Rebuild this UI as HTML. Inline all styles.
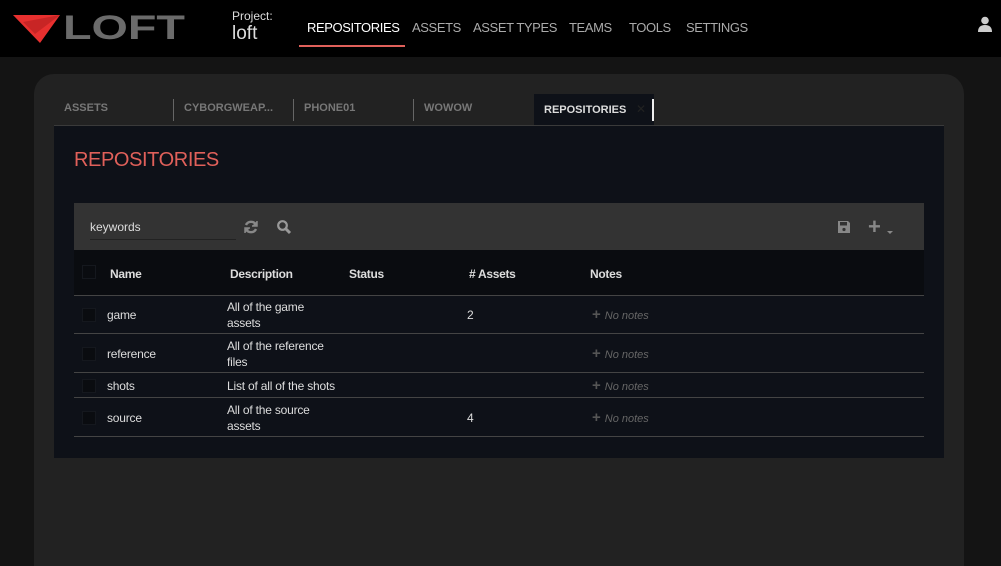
<!DOCTYPE html>
<html><head><meta charset="utf-8"><style>
*{margin:0;padding:0;box-sizing:border-box}
html,body{width:1001px;height:566px;overflow:hidden}
body{background:#141414;font-family:"Liberation Sans",sans-serif;position:relative}
.hdr{position:absolute;left:0;top:0;width:1001px;height:57px;background:#000}
.abs{position:absolute}
.nav{position:absolute;top:20px;font-size:13px;letter-spacing:-0.4px;color:#aaa}
.card{position:absolute;left:34px;top:74px;width:930px;height:520px;background:#222;border-radius:20px}
.tab{position:absolute;top:102px;font-size:11px;font-weight:bold;color:#777;height:20px}
.sep{position:absolute;top:99px;width:1px;height:22px;background:#666}
.panel{position:absolute;left:54px;top:125px;width:890px;height:333px;background:#0e1118;border-top:1px solid #3a3a3a}
.tool{position:absolute;left:74px;top:203px;width:850px;height:47px;background:#333}
.th{position:absolute;top:267px;font-size:12px;font-weight:bold;color:#ddd;letter-spacing:-0.3px}
.td{position:absolute;font-size:12px;color:#ddd;line-height:16px;letter-spacing:-0.2px}
.line{position:absolute;left:74px;width:850px;height:1px;background:#444}
.cb{position:absolute;left:82px;width:14px;height:14px;background:#0a0c10;border:1px solid #15181e}
.nn{position:absolute;left:592px;font-size:11px;color:#666;font-style:italic}
.nn b{font-style:normal;font-size:15px;font-weight:bold;margin-right:4px;color:#555}
</style></head><body>
<div class="hdr"></div>
<svg class="abs" style="left:13px;top:12px" width="175" height="32" viewBox="0 0 175 32">
<polygon points="0,3 47,3 27,31" fill="#e8302f"/>
<polygon points="10,10 47,3 22,22" fill="#c82525"/>
<text x="50" y="27" font-family="Liberation Sans" font-size="34" font-weight="bold" fill="#6b6b6b" textLength="122" lengthAdjust="spacingAndGlyphs">LOFT</text>
</svg>
<div class="abs" style="left:232px;top:9px;font-size:12px;color:#ddd">Project:</div>
<div class="abs" style="left:232px;top:23px;font-size:19px;color:#ddd">loft</div>
<div class="nav" style="left:307px;color:#fff">REPOSITORIES</div>
<div class="abs" style="left:299px;top:45px;width:106px;height:2px;background:#e0605a"></div>
<div class="nav" style="left:412px">ASSETS</div>
<div class="nav" style="left:473px">ASSET TYPES</div>
<div class="nav" style="left:569px">TEAMS</div>
<div class="nav" style="left:629px">TOOLS</div>
<div class="nav" style="left:686px">SETTINGS</div>
<svg class="abs" style="left:977px;top:16px" width="16" height="16" viewBox="0 0 16 16"><circle cx="8" cy="4.5" r="3.8" fill="#ccc"/><path d="M1 16 Q1 9 8 9 Q15 9 15 16Z" fill="#ccc"/></svg>
<div class="card"></div>
<div class="tab" style="left:64px">ASSETS</div>
<div class="sep" style="left:173px"></div>
<div class="tab" style="left:184px">CYBORGWEAP...</div>
<div class="sep" style="left:293px"></div>
<div class="tab" style="left:304px">PHONE01</div>
<div class="sep" style="left:413px"></div>
<div class="tab" style="left:424px">WOWOW</div>
<div class="abs" style="left:534px;top:94px;width:120px;height:31px;background:#0e1118"></div>
<div class="tab" style="left:544px;top:104px;color:#ddd">REPOSITORIES</div>
<div class="abs" style="left:636px;top:102px;font-size:12px;color:#222">✕</div>
<div class="abs" style="left:652px;top:99px;width:2px;height:22px;background:#eee"></div>
<div class="panel"></div>
<div class="abs" style="left:74px;top:149px;font-size:20px;letter-spacing:-0.4px;color:#e0605a">REPOSITORIES</div>
<div class="tool"></div>
<div class="abs" style="left:90px;top:220px;font-size:12px;color:#ddd">keywords</div>
<div class="abs" style="left:90px;top:239px;width:146px;height:1px;background:#222"></div>
<svg class="abs" style="left:243px;top:219px" width="16" height="16" viewBox="0 0 16 16" fill="none" stroke="#888" stroke-width="2.4"><path d="M13 6A5.5 5.5 0 0 0 3 6M3 10A5.5 5.5 0 0 0 13 10"/><path d="M14 2v5h-5M2 14V9h5" fill="#888" stroke-width="1.5"/></svg>
<svg class="abs" style="left:276px;top:219px" width="16" height="16" viewBox="0 0 16 16" fill="none" stroke="#999" stroke-width="2.2"><circle cx="6.5" cy="6.5" r="4.3"/><path d="M10 10l4 4" stroke-width="3"/></svg>
<svg class="abs" style="left:837px;top:220px" width="14" height="14" viewBox="0 0 14 14"><path d="M1 1h10l2 2v10H1z" fill="#888"/><rect x="3" y="2" width="7" height="3.5" fill="#333"/><circle cx="7" cy="9.5" r="1.6" fill="#333"/></svg>
<div class="abs" style="left:868px;top:214px;font-size:22px;font-weight:bold;color:#888">+</div>
<div class="abs" style="left:887px;top:231px;width:0;height:0;border-left:3px solid transparent;border-right:3px solid transparent;border-top:3px solid #888"></div>
<div class="abs" style="left:74px;top:250px;width:850px;height:45px;background:#0a0c10"></div>
<div class="cb" style="top:265px"></div>
<div class="th" style="left:110px">Name</div>
<div class="th" style="left:230px">Description</div>
<div class="th" style="left:349px">Status</div>
<div class="th" style="left:469px"># Assets</div>
<div class="th" style="left:590px">Notes</div>
<div class="line" style="top:295px"></div>
<div class="cb" style="top:308px"></div>
<div class="td" style="left:107px;top:307px">game</div>
<div class="td" style="left:227px;top:299px">All of the game<br>assets</div>
<div class="td" style="left:467px;top:307px">2</div>
<div class="nn" style="top:306px"><b>+</b>No notes</div>
<div class="line" style="top:333px"></div>
<div class="cb" style="top:347px"></div>
<div class="td" style="left:107px;top:346px">reference</div>
<div class="td" style="left:227px;top:338px">All of the reference<br>files</div>
<div class="nn" style="top:345px"><b>+</b>No notes</div>
<div class="line" style="top:372px"></div>
<div class="cb" style="top:379px"></div>
<div class="td" style="left:107px;top:378px">shots</div>
<div class="td" style="left:227px;top:378px">List of all of the shots</div>
<div class="nn" style="top:377px"><b>+</b>No notes</div>
<div class="line" style="top:397px"></div>
<div class="cb" style="top:411px"></div>
<div class="td" style="left:107px;top:410px">source</div>
<div class="td" style="left:227px;top:402px">All of the source<br>assets</div>
<div class="td" style="left:467px;top:410px">4</div>
<div class="nn" style="top:409px"><b>+</b>No notes</div>
<div class="line" style="top:436px"></div>
</body></html>
